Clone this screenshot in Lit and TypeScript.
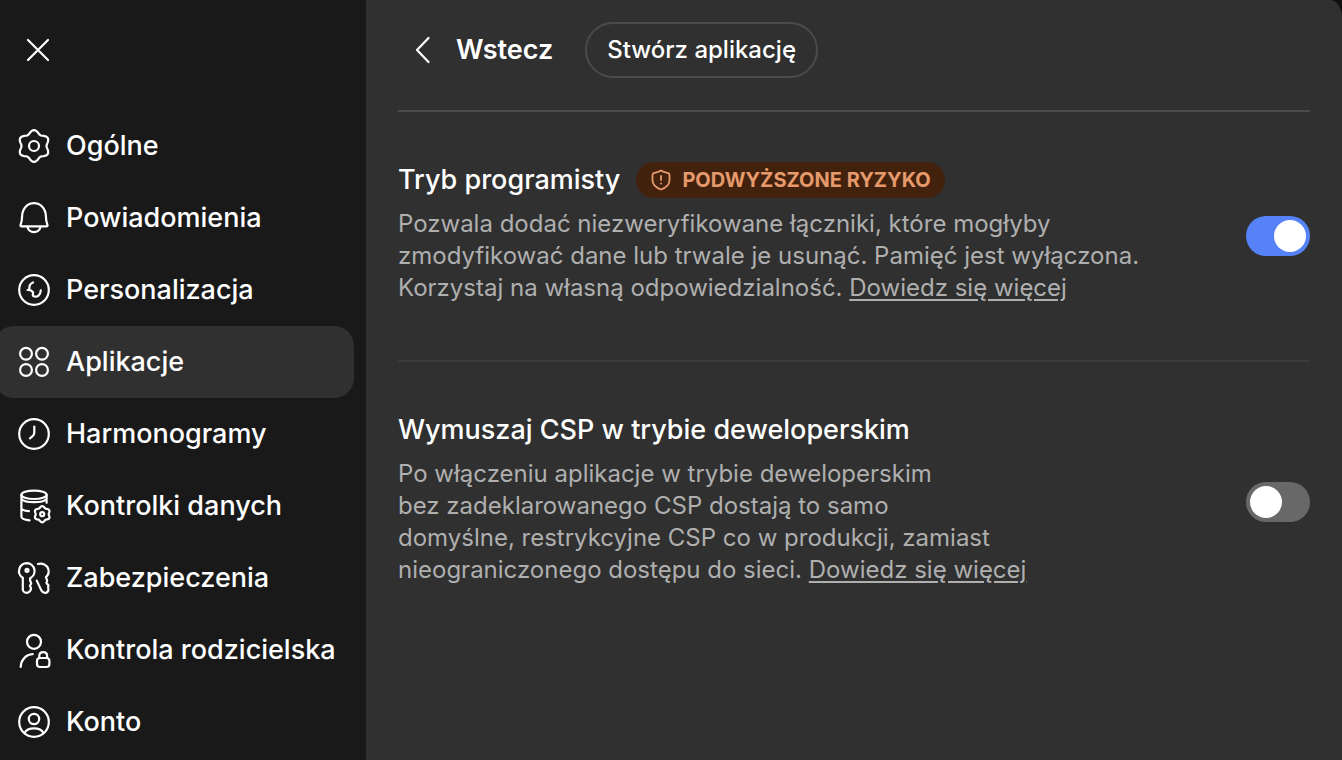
import { LitElement, html, css, svg } from "lit";
import { customElement, property, state } from "lit/decorators.js";

/* Closed outline whose radius swells into six rounded lobes, the first one pointing up. */
function lobes(cx: number, cy: number, radius: number, swell: number): string {
  const points: string[] = [];
  for (let a = 0; a < 360; a += 5) {
    const t = (a * Math.PI) / 180;
    const r = radius + swell * Math.cos(6 * t);
    points.push(`${(cx + r * Math.sin(t)).toFixed(2)} ${(cy - r * Math.cos(t)).toFixed(2)}`);
  }
  return `M${points.join("L")}Z`;
}

const icons = {
  general: svg`<path d=${lobes(16, 16, 14.2, 1.7)} /><circle cx="16" cy="16" r="5" />`,
  bell: svg`<path d="M3.500 24.300c-.8 0-1.200-.5-1-1.100 1-2.500 1.500-5.300 1.600-9C4.400 6.500 9.500 1.200 16 1.200s11.600 5.300 11.900 13c.1 3.700.6 6.500 1.600 9 .2.600-.2 1.100-1 1.100Z" /><path d="M9.300 24.800c1 3.400 3.500 5.300 6.700 5.300s5.700-1.900 6.700-5.300" />`,
  personal: svg`<circle cx="16" cy="16" r="14.800" /><path d="M15 8.500c-2.600 1-3.900 3-3.600 5.800M9.600 16c2.200-.2 4.300.7 5.600 2.500M15.200 18.500c-.7 1.500-.4 2.800.3 3.800 3.900 1.300 7-1.300 7.300-6" />`,
  apps: svg`<circle cx="8" cy="7.800" r="5.900" /><circle cx="24" cy="7.800" r="5.900" /><circle cx="8" cy="24" r="5.900" /><circle cx="24" cy="24" r="5.900" />`,
  clock: svg`<circle cx="16" cy="16" r="14.800" /><path d="M16.300 8.500v6c0 1.700-.5 2.700-1.700 3.700L12 20.300" />`,
  data: svg`<ellipse cx="16" cy="4.800" rx="12.600" ry="4.200" /><path d="M3.400 4.800v21.700c0 1.900 3.500 3.300 8.100 3.800M28.600 4.800v8M3.400 9c2 2.200 7 3.200 12.600 3.200s10.600-1 12.600-3.200M3.400 18c0 1.600 3.200 2.700 7.500 3.200" /><path d=${lobes(24.2, 24.2, 7.3, 0.8)} /><circle cx="24.200" cy="24.200" r="2" />`,
  keys: svg`<path d="M9 1.200a7.900 7.900 0 0 0-4.200 14.600v11.400c0 2 1.800 3.600 3.900 3.600s4.300-2.300 4.300-4.300c0-1-1-1.800-1-2.700s1.200-1.500 1.200-2.600-1.100-1.600-1.100-2.700v-2.300A7.900 7.900 0 0 0 9 1.200Z" /><circle cx="9" cy="8.300" r="1.500" /><path d="M20 2c4.300-1.400 9 .8 10.300 5 .9 3-.2 6.200-2.400 8.100l1.200 3.200c.4 1.100-1 1.700-.6 2.800s1.600 1.200 1.900 2.200-.5 1.700-.2 2.700c.7 2-.1 4-1.700 4.600-2 .7-4-.3-5.200-2.200L18.800 18.600" />`,
  parental: svg`<circle cx="16" cy="7.800" r="7" /><path d="M2.700 33c.2-7 4.900-12.300 12-12.800" /><rect x="19" y="24" width="12.400" height="9" rx="3" /><path d="M21.300 24v-2.200c0-2.200 1.600-3.700 3.900-3.700s3.900 1.500 3.900 3.700V24" />`,
  account: svg`<circle cx="16" cy="16" r="14.800" /><circle cx="16" cy="13" r="5.200" /><path d="M6.500 27c1.600-3.200 5.200-4.600 9.500-4.600s7.900 1.400 9.500 4.600" />`,
};

type IconName = keyof typeof icons;

const entries: { label: string; icon: IconName }[] = [
  { label: "Ogólne", icon: "general" },
  { label: "Powiadomienia", icon: "bell" },
  { label: "Personalizacja", icon: "personal" },
  { label: "Aplikacje", icon: "apps" },
  { label: "Harmonogramy", icon: "clock" },
  { label: "Kontrolki danych", icon: "data" },
  { label: "Zabezpieczenia", icon: "keys" },
  { label: "Kontrola rodzicielska", icon: "parental" },
  { label: "Konto", icon: "account" },
];

@customElement("settings-nav")
export class SettingsNav extends LitElement {
  @state() private current = "Aplikacje";

  static styles = css`
    :host {
      display: block;
      overflow: hidden;
      background: #191919;
    }
    button {
      font: inherit;
      color: inherit;
      background: none;
      border: 0;
      cursor: pointer;
    }
    svg {
      display: block;
      flex: none;
      overflow: visible;
      fill: none;
      stroke: currentColor;
      stroke-width: 2.2;
      stroke-linecap: round;
      stroke-linejoin: round;
    }
    .close {
      display: block;
      margin: 36px 0 46px 24px;
      padding: 0;
    }
    .list {
      list-style: none;
      margin: 0;
      padding: 0 12px 0 0;
    }
    .item {
      display: flex;
      margin-left: -6px;
    }
    .entry {
      flex: 1;
      display: flex;
      align-items: center;
      gap: 16px;
      height: 72px;
      padding: 0 0 0 24px;
      border-radius: 20px;
      text-align: left;
      white-space: nowrap;
    }
    .entry.active {
      background: #303030;
    }
  `;

  render() {
    return html`
      <button class="close" aria-label="Zamknij">
        <svg width="28" height="28" viewBox="0 0 28 28"><path d="M4 4l20 20M24 4L4 24" /></svg>
      </button>
      <nav>
        <ul class="list">
          ${entries.map(
            (e) => html`<li class="item">
              <button
                class="entry ${e.label === this.current ? "active" : ""}"
                @click=${() => (this.current = e.label)}
              >
                <svg width="32" height="32" viewBox="0 0 32 32">${icons[e.icon]}</svg>
                <span>${e.label}</span>
              </button>
            </li>`
          )}
        </ul>
      </nav>
    `;
  }
}

@customElement("toggle-switch")
export class ToggleSwitch extends LitElement {
  @property() label = "";
  @property({ type: Boolean }) on = false;

  static styles = css`
    :host {
      display: block;
      flex: none;
    }
    .switch {
      appearance: none;
      display: flex;
      align-items: center;
      box-sizing: border-box;
      width: 64px;
      height: 40px;
      margin: 0;
      padding: 4px;
      border-radius: 20px;
      background: #686868;
      cursor: pointer;
    }
    .switch::before {
      content: "";
      width: 32px;
      height: 32px;
      border-radius: 50%;
      background: #fff;
    }
    .switch:checked {
      justify-content: flex-end;
      background: #5583f7;
    }
  `;

  render() {
    return html`<input class="switch" type="checkbox" role="switch" aria-label=${this.label} .checked=${this.on} />`;
  }
}

@customElement("app-root")
export class AppRoot extends LitElement {
  static styles = css`
    :host {
      display: grid;
      grid-template-columns: 366px 1fr;
      min-height: 100vh;
      background: #101010;
      color: #fff;
      font-family: Inter, "Liberation Sans", sans-serif;
      font-size: 27px;
      font-weight: 450;
      line-height: 36px;
    }
    .panel {
      padding: 0 32px;
      background: #303030;
      border-top-right-radius: 12px 18px;
    }
    .head {
      display: flex;
      align-items: center;
      gap: 32px;
      padding: 22px 0 32px 16px;
      border-bottom: 2px solid #4b4b4b;
    }
    button {
      font: inherit;
      color: inherit;
      background: none;
      cursor: pointer;
    }
    .back {
      display: flex;
      align-items: center;
      gap: 22px;
      padding: 0;
      border: 0;
      font-weight: 600;
    }
    .back svg {
      fill: none;
      stroke: currentColor;
      stroke-width: 2.2;
      stroke-linecap: round;
      stroke-linejoin: round;
    }
    .create {
      height: 56px;
      padding: 0 20px;
      border: 2px solid #4b4b4b;
      border-radius: 28px;
      font-size: 24px;
      font-weight: 550;
    }
    .row {
      display: flex;
      align-items: center;
      justify-content: space-between;
      gap: 32px;
      padding: 48px 0 56px;
    }
    .row + .row {
      border-top: 2px solid #3a3a3a;
    }
    .row toggle-switch {
      padding-top: 8px;
    }
    .title {
      display: flex;
      align-items: center;
      gap: 16px;
      margin: 0 0 8px;
      min-height: 40px;
      font-size: 27px;
      font-weight: 450;
    }
    .badge {
      display: flex;
      align-items: center;
      gap: 10px;
      height: 36px;
      padding: 0 14px;
      border-radius: 18px;
      background: #43220d;
      color: #e69a6c;
      font-size: 20px;
      font-weight: 700;
    }
    .badge svg {
      fill: none;
      stroke: currentColor;
      stroke-width: 1.8;
      stroke-linecap: round;
      stroke-linejoin: round;
    }
    .text {
      margin: 0;
      color: #afafaf;
      font-size: 24px;
      font-weight: 400;
      line-height: 32px;
    }
    .text a {
      color: inherit;
      text-underline-offset: 3px;
    }
  `;

  render() {
    return html`
      <settings-nav></settings-nav>
      <main class="panel">
        <header class="head">
          <button class="back">
            <svg width="20" height="28" viewBox="0 0 20 28"><path d="M14.500 2L3 14l11.500 12" /></svg>
            <span>Wstecz</span>
          </button>
          <button class="create">Stwórz aplikację</button>
        </header>
        <section class="row">
          <div>
            <h2 class="title">
              Tryb programisty
              <span class="badge">
                <svg width="22" height="22" viewBox="0 0 22 22">
                  <path d="M11 1.500c2 1.500 4 2 6.300 2.300 1.400.2 2.200 1 2.200 2.500v5c0 4.700-3.500 7.500-8.500 9.200-5-1.700-8.500-4.500-8.500-9.200v-5c0-1.500.8-2.300 2.200-2.500C7 3.500 9 3 11 1.500Z" />
                  <path d="M11 7v4M11 14.300v.2" />
                </svg>
                PODWYŻSZONE RYZYKO
              </span>
            </h2>
            <p class="text">
              Pozwala dodać niezweryfikowane łączniki, które mogłyby<br />
              zmodyfikować dane lub trwale je usunąć. Pamięć jest wyłączona.<br />
              Korzystaj na własną odpowiedzialność. <a href="#">Dowiedz się więcej</a>
            </p>
          </div>
          <toggle-switch label="Tryb programisty" on></toggle-switch>
        </section>
        <section class="row">
          <div>
            <h2 class="title">Wymuszaj CSP w trybie deweloperskim</h2>
            <p class="text">
              Po włączeniu aplikacje w trybie deweloperskim<br />
              bez zadeklarowanego CSP dostają to samo<br />
              domyślne, restrykcyjne CSP co w produkcji, zamiast<br />
              nieograniczonego dostępu do sieci. <a href="#">Dowiedz się więcej</a>
            </p>
          </div>
          <toggle-switch label="Wymuszaj CSP w trybie deweloperskim"></toggle-switch>
        </section>
      </main>
    `;
  }
}
